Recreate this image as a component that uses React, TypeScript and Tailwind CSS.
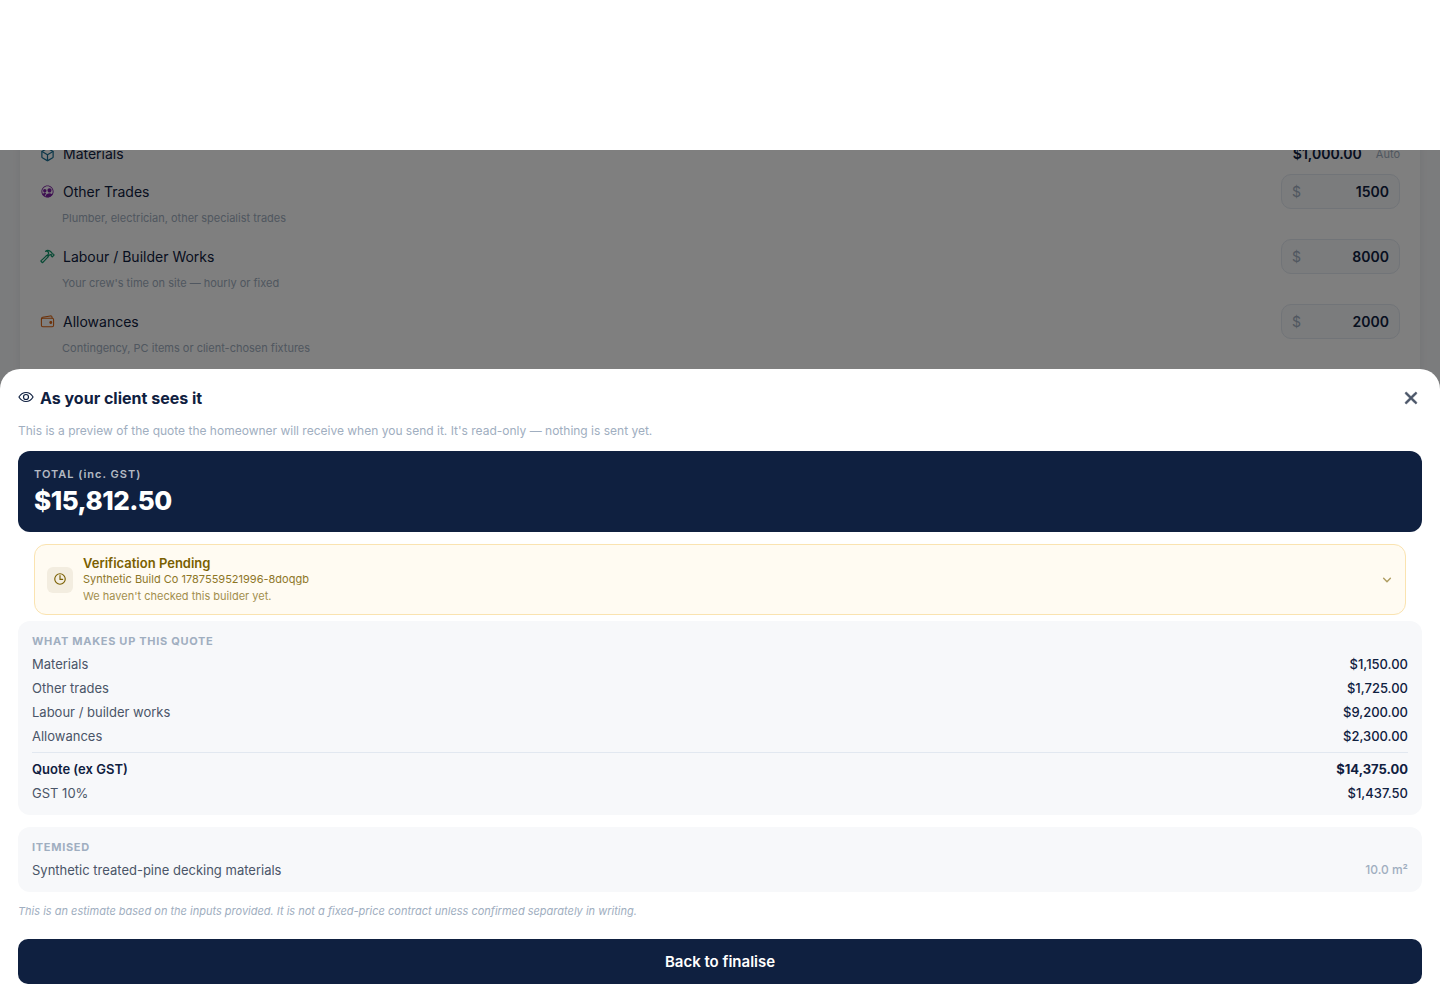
import type { ReactNode } from "react";
import {
  IoChevronDown,
  IoClose,
  IoCubeOutline,
  IoEyeOutline,
  IoHammerOutline,
  IoPeopleCircleOutline,
  IoTimeOutline,
  IoWalletOutline,
} from "react-icons/io5";

type Trade = {
  id: string;
  label: string;
  hint: string;
  value: string;
  icon: ReactNode;
};

const trades: Trade[] = [
  {
    id: "other",
    label: "Other Trades",
    hint: "Plumber, electrician, other specialist trades",
    value: "1500",
    icon: <IoPeopleCircleOutline className="size-[15px] text-[#7b1fa2]" />,
  },
  {
    id: "labour",
    label: "Labour / Builder Works",
    hint: "Your crew's time on site — hourly or fixed",
    value: "8000",
    icon: <IoHammerOutline className="size-[15px] text-[#10946a] [&_*]:stroke-[42px]" />,
  },
  {
    id: "allowances",
    label: "Allowances",
    hint: "Contingency, PC items or client-chosen fixtures",
    value: "2000",
    icon: <IoWalletOutline className="size-[15px] text-[#d9620f] [&_*]:stroke-[36px]" />,
  },
];

const breakdown = [
  ["Materials", "$1,150.00"],
  ["Other trades", "$1,725.00"],
  ["Labour / builder works", "$9,200.00"],
];

function TradeRow({ trade }: { trade: Trade }) {
  return (
    <div className="h-[65px]">
      <div className="flex items-center justify-between">
        <label htmlFor={trade.id} className="flex items-center gap-2 text-sm text-[#0f2040]">
          {trade.icon}
          {trade.label}
        </label>
        <div className="flex h-[35px] w-[119px] items-center rounded-[10px] border border-[#e2e8f0] bg-[#f7f8fa] px-2.5 text-sm">
          <span className="text-[#a0aec0]">$</span>
          <input
            id={trade.id}
            defaultValue={trade.value}
            className="w-full min-w-0 bg-transparent text-right font-semibold text-[#0f2040] outline-none"
          />
        </div>
      </div>
      <p className="pl-[22px] text-[11px] leading-[18px] text-[#a0aec0]">{trade.hint}</p>
    </div>
  );
}

function SectionTitle({ children }: { children: ReactNode }) {
  return (
    <h3 className="mb-1 text-[11px] leading-[13px] font-bold tracking-[0.7px] text-[#a0aec0]">{children}</h3>
  );
}

export default function App() {
  return (
    <div className="flex min-h-screen flex-col bg-white font-['Inter',sans-serif] text-[#0f2040]">
      <header className="relative z-10 h-[150px] bg-white" />

      <div className="relative flex flex-1 flex-col bg-[#f7f8fa]">
        <main className="mx-5 -mt-2 flex-1 bg-white px-5 shadow-[0_2px_8px_rgba(15,32,64,0.08)]">
          <div className="flex h-8 items-start justify-between pt-0.5 text-sm">
            <span className="flex items-center gap-2">
              <IoCubeOutline className="size-[15px] text-[#1a6f94] [&_*]:stroke-[42px]" />
              Materials
            </span>
            <span className="flex items-center gap-3.5">
              <span className="font-semibold">$1,000.00</span>
              <span className="text-[11px] leading-4 text-[#a0aec0]">Auto</span>
            </span>
          </div>
          {trades.map((trade) => (
            <TradeRow key={trade.id} trade={trade} />
          ))}
        </main>

        <div className="absolute inset-0 flex flex-col justify-end bg-black/50">
          <section
            role="dialog"
            aria-labelledby="preview-title"
            className="rounded-t-[20px] bg-white px-[18px] pt-[18px] pb-4"
          >
            <div className="flex h-[22px] items-center justify-between">
              <h2 id="preview-title" className="flex items-center gap-1.5 text-base font-bold">
                <IoEyeOutline className="mb-0.5 size-4 [&_*]:stroke-[38px]" />
                As your client sees it
              </h2>
              <button type="button" aria-label="Close" className="text-[#4a5568]">
                <IoClose className="size-[22px] [&_*]:stroke-[12px]" />
              </button>
            </div>
            <p className="mt-3.5 text-xs leading-4 text-[#a0aec0]">
              This is a preview of the quote the homeowner will receive when you send it. It's read-only — nothing is
              sent yet.
            </p>

            <div className="mt-3 rounded-xl bg-[#0f2040] px-4 pt-4 pb-3.5 text-white">
              <p className="text-[11px] leading-[14px] font-semibold tracking-[1px] text-white/70">
                TOTAL (inc. GST)
              </p>
              <p className="mt-0.5 text-[26px] leading-[35px] font-extrabold tracking-[-0.5px]">$15,812.50</p>
            </div>

            <button
              type="button"
              className="mx-4 mt-3 flex h-[71px] w-[calc(100%-32px)] items-center gap-2.5 rounded-xl border border-[#fae3b0] bg-[#fffbf2] px-3 text-left text-[#7a5f00]"
            >
              <span className="flex size-[26px] items-center justify-center rounded-md bg-[#f3ede0] pb-0.5">
                <IoTimeOutline className="size-3.5 [&_*]:stroke-[42px]" />
              </span>
              <span className="flex flex-1 flex-col">
                <span className="text-[13px] leading-4 font-semibold">Verification Pending</span>
                <span className="text-[11px] leading-4 opacity-85">Synthetic Build Co 1787559521996-8doqgb</span>
                <span className="mt-px text-[11px] leading-4 opacity-70">We haven't checked this builder yet.</span>
              </span>
              <IoChevronDown className="size-3 opacity-60 [&_*]:stroke-[60px]" />
            </button>

            <div className="mt-1.5 rounded-xl bg-[#f7f8fa] px-3.5 pt-3.5 pb-2.5">
              <SectionTitle>WHAT MAKES UP THIS QUOTE</SectionTitle>
              <table className="w-full border-separate border-spacing-0 text-[13px] leading-4">
                <tbody>
                  {breakdown.map(([label, amount]) => (
                    <tr key={label}>
                      <th scope="row" className="py-1 text-left font-normal text-[#4a5568]">{label}</th>
                      <td className="py-1 text-right font-medium">{amount}</td>
                    </tr>
                  ))}
                  <tr>
                    <th scope="row" className="pt-1 pb-2 text-left font-normal text-[#4a5568]">Allowances</th>
                    <td className="pt-1 pb-2 text-right font-medium">$2,300.00</td>
                  </tr>
                  <tr>
                    <th scope="row" className="border-t border-[#e2e8f0] pt-2 pb-1 text-left font-semibold">
                      Quote (ex GST)
                    </th>
                    <td className="border-t border-[#e2e8f0] pt-2 pb-1 text-right font-bold">$14,375.00</td>
                  </tr>
                  <tr>
                    <th scope="row" className="py-1 text-left font-normal text-[#4a5568]">GST 10%</th>
                    <td className="py-1 text-right font-medium">$1,437.50</td>
                  </tr>
                </tbody>
              </table>
            </div>

            <div className="mt-3 rounded-xl bg-[#f7f8fa] px-3.5 pt-3.5 pb-2.5">
              <SectionTitle>ITEMISED</SectionTitle>
              <div className="flex items-center justify-between py-1 leading-4">
                <span className="text-[13px] text-[#4a5568]">Synthetic treated-pine decking materials</span>
                <span className="text-xs font-medium text-[#a0aec0]">10.0 m²</span>
              </div>
            </div>

            <p className="mt-3 text-[11px] leading-[14px] text-[#a0aec0] italic">
              This is an estimate based on the inputs provided. It is not a fixed-price contract unless confirmed
              separately in writing.
            </p>

            <button
              type="button"
              className="mt-[21px] h-[45px] w-full rounded-[10px] bg-[#0f2040] pt-0.5 text-[15px] font-semibold text-white"
            >
              Back to finalise
            </button>
          </section>
        </div>
      </div>
    </div>
  );
}
